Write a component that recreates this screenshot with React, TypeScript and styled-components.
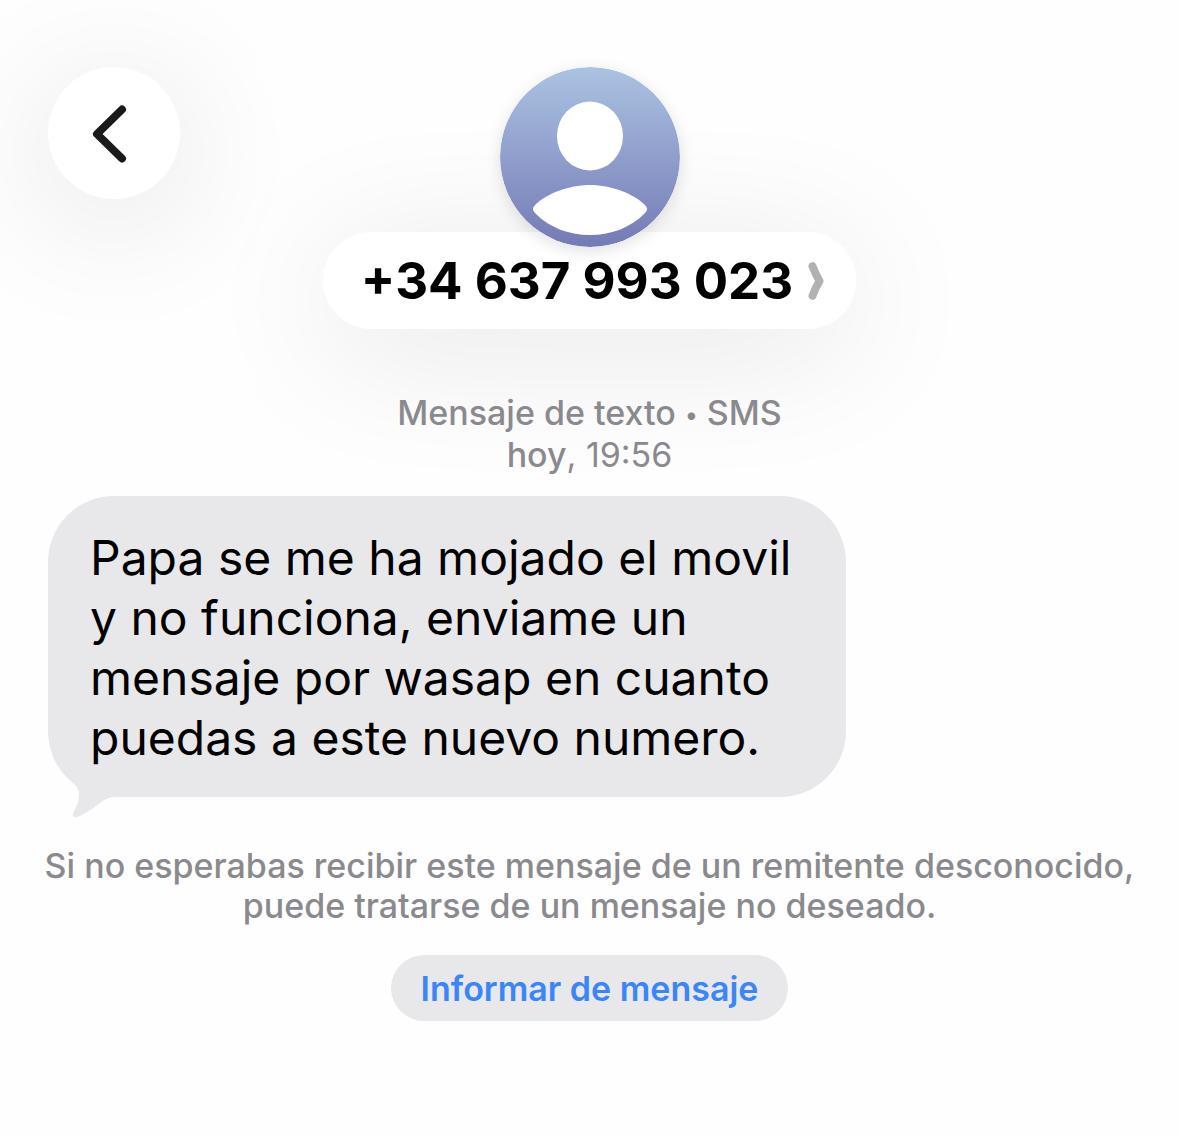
import styled, { createGlobalStyle } from 'styled-components';

function App() {
  return (
    <>
      <GlobalStyle />
      <Screen>
        <Header>
          <BackButton type='button' aria-label='Atrás'>
            <svg width='36' height='60' viewBox='0 0 36 60' fill='none' aria-hidden='true'>
              <path d='M30 6.5 L5 31 L30 55.5' stroke='#1a1a1a' strokeWidth='8' strokeLinecap='round' strokeLinejoin='round' />
            </svg>
          </BackButton>
          <Contact>
            <Avatar />
            <ContactButton type='button'>
              +34 637 993 023
              <svg width='16' height='40' viewBox='0 0 16 40' fill='none' aria-hidden='true'>
                <path d='M4.5 5.2 C6.5 10.5 8.5 15 11.5 20 C8.5 25 6.5 29.5 4.5 34.8' stroke='#b1b1b1' strokeWidth='8' strokeLinecap='round' strokeLinejoin='round' />
              </svg>
            </ContactButton>
          </Contact>
        </Header>
        <Conversation>
          <Stamp>
            <div>Mensaje de texto <Dot>•</Dot> SMS</div>
            <div>hoy<time>, 19:56</time></div>
          </Stamp>
          <Bubble>
            Papa se me ha mojado el movil y no funciona, enviame un mensaje por wasap en cuanto puedas a este nuevo numero.
            <Tail width='70' height='80' viewBox='0 0 70 80' aria-hidden='true'>
              <path d='M4 13 C7 24 14 33 25 43 C30 47 31 51 31 54 C31 62 28 67 25 73 C24 77 26 78 29 77 C40 73 49 65 56 60 C60 58 63 57 69 57 V13 Z' fill='#e8e8ea' />
            </Tail>
          </Bubble>
          <Warning>
            Si no esperabas recibir este mensaje de un remitente desconocido, puede tratarse de un mensaje no deseado.
          </Warning>
          <ReportButton type='button'>Informar de mensaje</ReportButton>
        </Conversation>
      </Screen>
    </>
  )
}

export default App

function Avatar() {
  return (
    <AvatarImage viewBox='0 0 180 180' aria-hidden='true'>
      <defs>
        <linearGradient id='avatar' x1='0' y1='0' x2='0' y2='1'>
          <stop offset='0' stopColor='#abc3e2' />
          <stop offset='1' stopColor='#757ab5' />
        </linearGradient>
      </defs>
      <circle cx='90' cy='90' r='90' fill='url(#avatar)' />
      <ellipse cx='90' cy='69' rx='33' ry='34.5' fill='#fff' />
      <path d='M90 118 C112 118 133 127 144 137 C148 141 148 143 144 147 C131 160 112 168 90 168 C68 168 49 160 36 147 C32 143 32 141 36 137 C47 127 68 118 90 118 Z' fill='#fff' />
    </AvatarImage>
  )
}

const GlobalStyle = createGlobalStyle`
  *, *::before, *::after {
    box-sizing: border-box;
  }

  body {
    margin: 0;
    background: #fefefe;
    color: #000;
    font-family: Inter, 'Liberation Sans', sans-serif;
  }

  button {
    border: none;
    font-family: inherit;
    cursor: pointer;
  }
`

const Screen = styled.div`
  min-height: 100vh;
  padding: 67px 0 60px;
  overflow: hidden;
`

const Header = styled.header`
  display: grid;
  grid-template-columns: 132px 1fr 132px;
  align-items: start;
  padding: 0 48px;
`

const BackButton = styled.button`
  display: flex;
  align-items: center;
  justify-content: center;
  height: 132px;
  padding: 0 8px 0 0;
  border-radius: 50%;
  background: #fff;
  box-shadow: 0 20px 140px rgba(0, 0, 0, 0.12);
`

const Contact = styled.div`
  display: flex;
  flex-direction: column;
  align-items: center;
`

const AvatarImage = styled.svg`
  position: relative;
  z-index: 1;
  width: 180px;
  height: 180px;
  margin-bottom: -15px;
  border-radius: 50%;
  box-shadow: 0 4px 16px rgba(0, 0, 0, 0.12);
`

const ContactButton = styled.button`
  display: flex;
  align-items: center;
  gap: 15px;
  height: 97px;
  padding: 0 32px 0 38px;
  border-radius: 48px;
  background: #fff;
  color: #000;
  font-size: 51px;
  font-weight: 700;
  white-space: nowrap;
  box-shadow: 0 20px 140px rgba(0, 0, 0, 0.1);
`

const Conversation = styled.main`
  display: flex;
  flex-direction: column;
  align-items: center;
  padding: 0 32px;
`

const Stamp = styled.div`
  margin: 63px 0 20px;
  color: #8a8a8e;
  font-size: 34px;
  font-weight: 500;
  line-height: 42px;
  text-align: center;

  time {
    font-weight: 400;
  }
`

const Dot = styled.span`
  font-size: 24px;
  line-height: 1;
  vertical-align: 2px;
`

const Bubble = styled.p`
  position: relative;
  isolation: isolate;
  align-self: flex-start;
  max-width: 798px;
  margin: 0 16px;
  padding: 32px 42px 29px;
  border-radius: 66px;
  background: #e8e8ea;
  font-size: 48px;
  line-height: 60px;
`

/* sits between the bubble's background and its text */
const Tail = styled.svg`
  position: absolute;
  z-index: -1;
  left: 0;
  bottom: -23px;
`

const Warning = styled.p`
  margin: 49px 0 29px;
  color: #8a8a8e;
  font-size: 34px;
  font-weight: 500;
  line-height: 40px;
  text-align: center;
`

const ReportButton = styled.button`
  height: 66px;
  padding: 0 30px;
  border-radius: 33px;
  background: #e8e8ea;
  color: #3b86f7;
  font-size: 34px;
  font-weight: 600;
`
